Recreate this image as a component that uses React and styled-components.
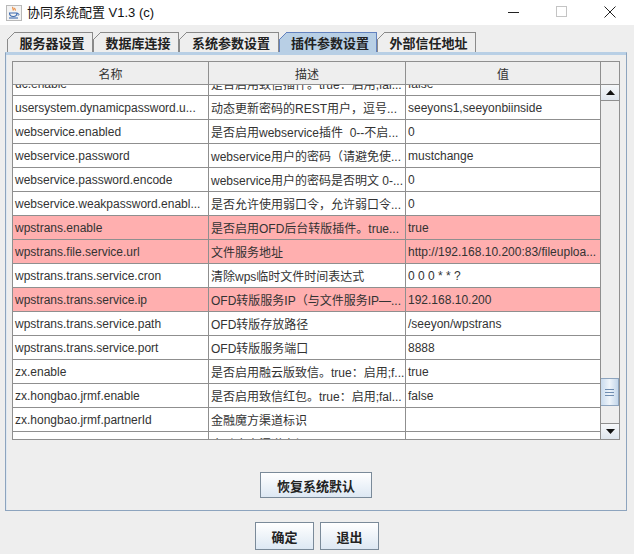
import React from 'react'
import styled, { createGlobalStyle } from 'styled-components';

const Global = createGlobalStyle`
    html, body {
        margin: 0;
        padding: 0;
        background: #eeeeee;
    }
    * {
        box-sizing: border-box;
    }
`

const FONT = `"Liberation Sans", Arial, "Noto Sans CJK SC", sans-serif`
const GRID = '#8f8f8f'

const Window = styled.div`
    width: 634px;
    height: 554px;
    display: flex;
    flex-direction: column;
    background: #eeeeee;
    font-family: ${FONT};
    overflow: hidden;
`

const TitleBar = styled.div`
    height: 25px;
    background: #ffffff;
    display: flex;
    align-items: center;
    padding-left: 6px;
    gap: 5px;
`

const Title = styled.span`
    font-size: 13px;
    color: #111;
    margin-top: -2px;
`

const WinButtons = styled.div`
    margin-left: auto;
    display: flex;
    height: 100%;
`

const WinButton = styled.div`
    width: 48px;
    height: 100%;
    display: flex;
    align-items: center;
    justify-content: center;
    padding-bottom: 2px;
`

const TabStrip = styled.div`
    display: flex;
    height: 20px;
    margin-top: 7px;
    padding-left: 7px;
`

const Tab = styled.div`
    position: relative;
    width: ${p => p.$w}px;
    height: 20px;
    border: 1px solid ${p => p.$active ? '#6382bf' : '#8a8a8a'};
    border-bottom: none;
    background: ${p => p.$active ? '#b8cfe5' : '#eeeeee'};
    display: flex;
    align-items: center;
    justify-content: center;
    padding-left: 4px;
    font-size: 13px;
    font-weight: bold;
    color: #222;
    font-family: "Noto Sans CJK SC", sans-serif;
    &::before {
        content: '';
        position: absolute;
        top: -1px;
        left: -1px;
        width: 9px;
        height: 9px;
        background: linear-gradient(135deg, #eeeeee 0 5px, ${p => p.$active ? '#6382bf' : '#8a8a8a'} 5px 6px, transparent 6px);
    }
`

const Panel = styled.div`
    margin: 0 7px 0 5px;
    height: 459px;
    border: 1px solid #8da4be;
    border-top: 1px solid #b8cfe5;
    box-shadow: inset 0 2px 0 #b8cfe5, inset 1px 0 0 #dfe8f1;
    padding: 8px 6px 0 6px;
    display: flex;
    flex-direction: column;
    align-items: center;
`

const ScrollPane = styled.div`
    width: 608px;
    height: 379px;
    border: 1px solid ${GRID};
    background: #ffffff;
    display: flex;
`

const TableArea = styled.div`
    width: 587px;
    display: flex;
    flex-direction: column;
`

const Row = styled.div`
    display: grid;
    grid-template-columns: 196px 197px 194px;
    height: ${p => p.$header ? 23 : 24}px;
    flex-shrink: 0;
    background: ${p => p.$header ? '#eeeeee' : p.$hot ? '#ffafaf' : '#ffffff'};
    border-bottom: 1px solid ${GRID};
`

const Cell = styled.div`
    border-right: 1px solid ${GRID};
    &:last-child {
        border-right: none;
    }
    display: flex;
    align-items: center;
    justify-content: ${p => p.$header ? 'center' : 'flex-start'};
    padding: 0 2px;
    font-size: 12px;
    color: #333333;
    white-space: pre;
    overflow: hidden;
`

const Viewport = styled.div`
    flex: 1;
    overflow: hidden;
    display: flex;
    flex-direction: column;
`

const Rows = styled.div`
    margin-top: -13px;
    display: flex;
    flex-direction: column;
`

const ScrollCol = styled.div`
    width: 19px;
    border-left: 1px solid ${GRID};
    display: flex;
    flex-direction: column;
    background: #eeeeee;
`

const Corner = styled.div`
    height: 23px;
    border-bottom: 1px solid ${GRID};
    background: #eeeeee;
`

const ArrowButton = styled.div`
    height: 16px;
    display: flex;
    align-items: center;
    justify-content: center;
    background: linear-gradient(#f6f8fa, #dfe6ee);
    border-bottom: ${p => p.$up ? `1px solid ${GRID}` : 'none'};
    border-top: ${p => p.$up ? 'none' : `1px solid ${GRID}`};
`

const Track = styled.div`
    flex: 1;
    display: flex;
    flex-direction: column;
`

const Thumb = styled.div`
    margin-top: ${p => p.$offset}px;
    height: 28px;
    border: 1px solid #8da4be;
    border-left: none;
    background: linear-gradient(90deg, #c9dbee, #eef4fa 50%, #c3d6ea);
    display: flex;
    flex-direction: column;
    align-items: center;
    justify-content: center;
    gap: 2px;
    span {
        width: 9px;
        height: 1px;
        background: #6f8db1;
    }
`

const Button = styled.button`
    width: ${p => p.$w}px;
    height: ${p => p.$h}px;
    border: 1px solid #7a8a99;
    background: linear-gradient(#ffffff, #dde8f3);
    font-family: "Noto Sans CJK SC", sans-serif;
    font-size: 13px;
    font-weight: bold;
    color: #222;
    padding: 0;
    cursor: pointer;
`

const RestoreWrap = styled.div`
    margin-top: 32px;
`

const Footer = styled.div`
    display: flex;
    justify-content: center;
    gap: 6px;
    padding-top: 11px;
`

const JavaIcon = () => (
    <svg width="16" height="16" viewBox="0 0 16 16">
        <rect x="0.5" y="0.5" width="15" height="15" fill="#f3f3f3" stroke="#b9b9b9" />
        <path d="M7 2c-1 1 1 2 0 3.5M9 3c-1 1 1 1.5 0 2.5" stroke="#e8761c" strokeWidth="1.1" fill="none" />
        <path d="M3.5 8h7.5c0 2-1.5 3.5-3.7 3.5S3.5 10 3.5 8z" fill="none" stroke="#3c6bb0" strokeWidth="1.1" />
        <path d="M11 8.6h1.2c1 0 1 1.8-.4 1.8" fill="none" stroke="#3c6bb0" strokeWidth="1" />
        <path d="M3 13h9" stroke="#3c6bb0" strokeWidth="1.1" />
    </svg>
)

const tabs = [
    { label: '服务器设置', w: 86 },
    { label: '数据库连接', w: 86 },
    { label: '系统参数设置', w: 100 },
    { label: '插件参数设置', w: 98, active: true },
    { label: '外部信任地址', w: 99 },
]

const rows = [
    ['uc.enable', '是否启用致信插件。true：启用,fal...', 'false'],
    ['usersystem.dynamicpassword.u...', '动态更新密码的REST用户，逗号...', 'seeyons1,seeyonbiinside'],
    ['webservice.enabled', '是否启用webservice插件  0--不启...', '0'],
    ['webservice.password', 'webservice用户的密码（请避免使...', 'mustchange'],
    ['webservice.password.encode', 'webservice用户的密码是否明文 0-...', '0'],
    ['webservice.weakpassword.enabl...', '是否允许使用弱口令，允许弱口令...', '0'],
    ['wpstrans.enable', '是否启用OFD后台转版插件。true...', 'true', true],
    ['wpstrans.file.service.url', '文件服务地址', 'http://192.168.10.200:83/fileuploa...', true],
    ['wpstrans.trans.service.cron', '清除wps临时文件时间表达式', '0 0 0 * * ?'],
    ['wpstrans.trans.service.ip', 'OFD转版服务IP（与文件服务IP—...', '192.168.10.200', true],
    ['wpstrans.trans.service.path', 'OFD转版存放路径', '/seeyon/wpstrans'],
    ['wpstrans.trans.service.port', 'OFD转版服务端口', '8888'],
    ['zx.enable', '是否启用融云版致信。true：启用;f...', 'true'],
    ['zx.hongbao.jrmf.enable', '是否启用致信红包。true：启用;fal...', 'false'],
    ['zx.hongbao.jrmf.partnerId', '金融魔方渠道标识', ''],
    ['zx.hongbao.jrmf.secret', '金融魔方渠道密钥', ''],
]

const App = () => {
    return (
        <Window>
            <Global />
            <TitleBar>
                <JavaIcon />
                <Title>协同系统配置 V1.3 (c)</Title>
                <WinButtons>
                    <WinButton>
                        <svg width="12" height="12"><path d="M0 6.5h11" stroke="#222" /></svg>
                    </WinButton>
                    <WinButton>
                        <svg width="12" height="12"><rect x="0.5" y="0.5" width="10" height="10" fill="none" stroke="#c4c4c4" /></svg>
                    </WinButton>
                    <WinButton>
                        <svg width="12" height="12"><path d="M0.5 0.5l11 11M11.5 0.5l-11 11" stroke="#222" /></svg>
                    </WinButton>
                </WinButtons>
            </TitleBar>

            <TabStrip>
                {tabs.map(t => (
                    <Tab key={t.label} $w={t.w} $active={t.active}>{t.label}</Tab>
                ))}
            </TabStrip>

            <Panel>
                <ScrollPane>
                    <TableArea>
                        <Row $header>
                            <Cell $header>名称</Cell>
                            <Cell $header>描述</Cell>
                            <Cell $header>值</Cell>
                        </Row>
                        <Viewport>
                            <Rows>
                                {rows.map(r => (
                                    <Row key={r[0]} $hot={r[3]}>
                                        <Cell>{r[0]}</Cell>
                                        <Cell>{r[1]}</Cell>
                                        <Cell>{r[2]}</Cell>
                                    </Row>
                                ))}
                            </Rows>
                        </Viewport>
                    </TableArea>
                    <ScrollCol>
                        <Corner />
                        <ArrowButton $up>
                            <svg width="9" height="5"><path d="M4.5 0L9 5H0z" fill="#111" /></svg>
                        </ArrowButton>
                        <Track>
                            <Thumb $offset={277}>
                                <span /><span /><span />
                            </Thumb>
                        </Track>
                        <ArrowButton>
                            <svg width="9" height="5"><path d="M0 0h9L4.5 5z" fill="#111" /></svg>
                        </ArrowButton>
                    </ScrollCol>
                </ScrollPane>
                <RestoreWrap>
                    <Button $w={112} $h={26}>恢复系统默认</Button>
                </RestoreWrap>
            </Panel>

            <Footer>
                <Button $w={59} $h={28}>确定</Button>
                <Button $w={59} $h={28}>退出</Button>
            </Footer>
        </Window>
    )
}

export default App;
